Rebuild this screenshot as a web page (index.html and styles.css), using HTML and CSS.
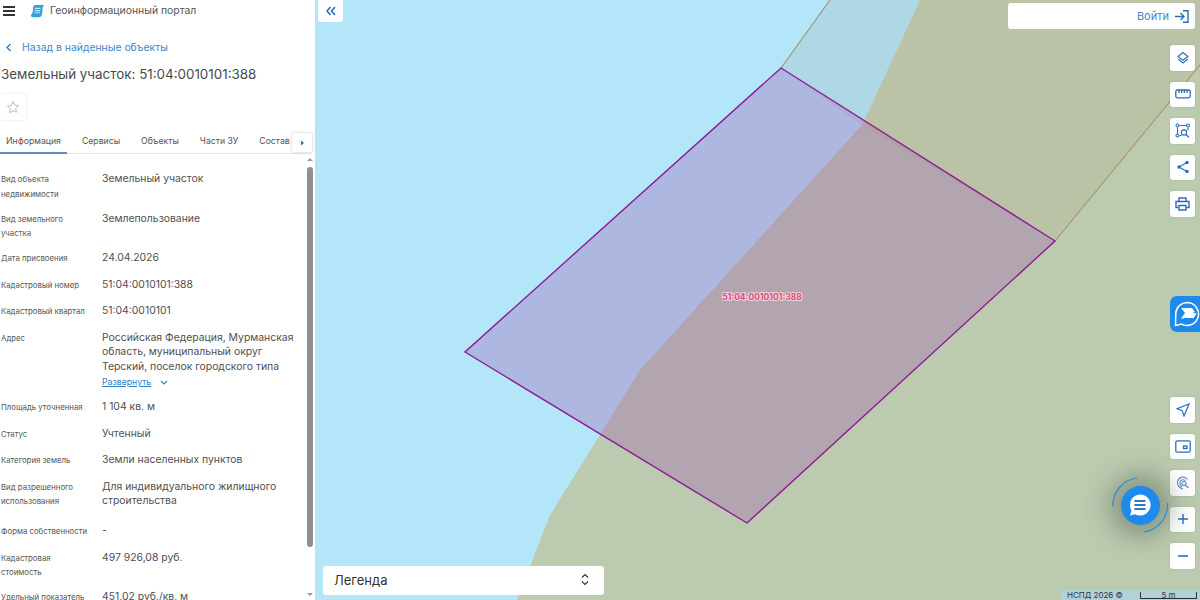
FILE: index.html
```html
<!DOCTYPE html>
<html lang="ru">
<head>
    <meta charset="UTF-8">
    <title>Геоинформационный портал</title>
    <link rel="stylesheet" href="styles.css">
</head>
<body>
<div class="page">
    <aside class="sidebar">
        <header class="topbar">
            <div class="burger"><span></span><span></span><span></span></div>
            <svg class="logo" width="15" height="14" viewBox="0 0 16 16" preserveAspectRatio="none">
                <path d="M6 1h9c-.8 1-1.300 2-1.500 3.500L13 11c-.2 2.500-1.500 4-4 4H3C1 15 .5 13 1.500 12 2.300 11 2.800 10 3 8.500L3.300 4C3.500 2 4.500 1 6 1z" fill="#2f9fe6"/>
                <path d="M5.300 5h6M5 7.500h6M4.800 10h6" stroke="#bdeef5" stroke-width="1.300"/>
            </svg>
            <span class="portal-name">Геоинформационный портал</span>
        </header>

        <a class="back-link">
            <svg width="7" height="9" viewBox="0 0 7 9"><path d="M5.500 1 2 4.500 5.500 8" fill="none" stroke="#2b7fc9" stroke-width="1.400"/></svg>
            <span>Назад в найденные объекты</span>
        </a>

        <h1 class="title">Земельный участок: 51:04:0010101:388</h1>

        <div class="star-btn">
            <svg width="14" height="14" viewBox="0 0 14 14"><path d="m7 1.500 1.700 3.600 3.900.5-2.900 2.700.8 3.900L7 10.800l-3.500 1.900.8-3.900-2.900-2.700 3.900-.5z" fill="none" stroke="#b4b4b4" stroke-width=".9"/></svg>
        </div>

        <nav class="tabs">
            <a class="tab active">Информация</a>
            <a class="tab">Сервисы</a>
            <a class="tab">Объекты</a>
            <a class="tab">Части ЗУ</a>
            <a class="tab">Состав</a>
            <div class="tab-next"><svg width="5" height="6" viewBox="0 0 5 6"><path d="M1 0.500 4 3 1 5.500z" fill="#2b6cb8"/></svg></div>
        </nav>

        <div class="info">
            <div class="row"><div class="label">Вид объекта недвижимости</div><div class="value">Земельный участок</div></div>
            <div class="row"><div class="label">Вид земельного участка</div><div class="value">Землепользование</div></div>
            <div class="row"><div class="label">Дата присвоения</div><div class="value">24.04.2026</div></div>
            <div class="row"><div class="label">Кадастровый номер</div><div class="value">51:04:0010101:388</div></div>
            <div class="row"><div class="label">Кадастровый квартал</div><div class="value">51:04:0010101</div></div>
            <div class="row">
                <div class="label">Адрес</div>
                <div class="value">
                    Российская Федерация, Мурманская область, муниципальный округ Терский, поселок городского типа
                    <div class="expand">
                        <a>Развернуть</a>
                        <svg width="8" height="5" viewBox="0 0 8 5"><path d="M1 1 4 4 7 1" fill="none" stroke="#2b7fc9" stroke-width="1.100"/></svg>
                    </div>
                </div>
            </div>
            <div class="row"><div class="label">Площадь уточненная</div><div class="value">1 104 кв. м</div></div>
            <div class="row"><div class="label">Статус</div><div class="value">Учтенный</div></div>
            <div class="row"><div class="label">Категория земель</div><div class="value">Земли населенных пунктов</div></div>
            <div class="row row-spaced"><div class="label">Вид разрешенного использования</div><div class="value">Для индивидуального жилищного строительства</div></div>
            <div class="row"><div class="label">Форма собственности</div><div class="value">-</div></div>
            <div class="row"><div class="label">Кадастровая стоимость</div><div class="value">497 926,08 руб.</div></div>
            <div class="row"><div class="label">Удельный показатель</div><div class="value">451,02 руб./кв. м</div></div>
        </div>

        <div class="scroll-up"></div>
        <div class="scroll-thumb"></div>
        <div class="scroll-down"></div>
    </aside>

    <main class="map">
        <svg class="map-canvas" viewBox="315 0 885 600" width="885" height="600">
            <rect x="315" y="0" width="885" height="600" fill="#b3e6f9"/>
            <path d="M920 0 862 125 640 370 600 435 550 515 517 600H1200V0z" fill="#bccbb0"/>
            <path d="M920 0H1200V65L1055 241 862 125z" fill="#bac3a5"/>
            <path d="M830 0H920L862 125 781 68z" fill="#aed8e6"/>
            <path d="M830 0 781 68M1200 65 1055 241" fill="none" stroke="#a8906a" stroke-width="1.100"/>
            <path d="M781 68 1055 241 747 523 465 352z" fill="#a057ac" fill-opacity=".33" stroke="#8f1a96" stroke-width="1.400"/>
            <text class="parcel-label" x="762" y="300" text-anchor="middle">51:04:0010101:388</text>
        </svg>

        <div class="collapse-btn">
            <svg width="12" height="12" viewBox="0 0 12 12"><path d="M5.500 2 2 6l3.500 4M10 2 6.500 6l3.500 4" fill="none" stroke="#2b6cb8" stroke-width="1.500"/></svg>
        </div>

        <div class="login">
            <span>Войти</span>
            <svg width="14" height="13" viewBox="0 0 14 13"><path d="M0 6.500h8.500M5.500 3l3.500 3.500L5.500 10M8 .7h5v11.600H8" fill="none" stroke="#2b6cb8" stroke-width="1.400"/></svg>
        </div>

        <div class="tools tools-top">
            <div class="tool">
                <svg width="14" height="14" viewBox="0 0 14 14" fill="none" stroke="#2b6cb8" stroke-width="1.100"><path d="M7 1.500 12 5.500 7 9.300 2 5.500z"/><path d="M2 8 7 12 12 8"/></svg>
            </div>
            <div class="tool">
                <svg width="16" height="10" viewBox="0 0 16 10" fill="none" stroke="#2b6cb8" stroke-width="1.300"><rect x=".8" y="1" width="14.400" height="7.800" rx="1.500"/><path d="M4 1v3M6.700 1v3M9.400 1v3M12.100 1v3"/></svg>
            </div>
            <div class="tool">
                <svg width="16" height="16" viewBox="0 0 16 16" fill="none" stroke="#2b6cb8" stroke-width="1.100"><circle cx="2.500" cy="2.500" r="1.500"/><circle cx="13" cy="2.500" r="1.500"/><circle cx="2.500" cy="12.500" r="1.500"/><circle cx="9" cy="9.500" r="2.600"/><path d="M4.500 2.500h6.500M2.500 4.500v6M13 4.500v3M4.500 12.500h2M11 11.500l3 3"/></svg>
            </div>
            <div class="tool">
                <svg width="14" height="14" viewBox="0 0 14 14"><path d="M11 2.500 3 7l8 4.500" fill="none" stroke="#2b6cb8" stroke-width="1.100"/><circle cx="11" cy="2.500" r="1.700" fill="#2b6cb8"/><circle cx="3" cy="7" r="1.700" fill="#2b6cb8"/><circle cx="11" cy="11.500" r="1.700" fill="#2b6cb8"/></svg>
            </div>
            <div class="tool">
                <svg width="15" height="14" viewBox="0 0 15 14" fill="none" stroke="#2b6cb8" stroke-width="1.400"><path d="M4 4V1h7v3M3.500 10.500H1V4.500h13v6h-2.500"/><path d="M4 8.500h7v4.500H4z"/></svg>
            </div>
        </div>

        <div class="assistant">
            <svg width="28" height="28" viewBox="0 0 28 28" fill="none" stroke="#fff" stroke-width="1.500"><path d="M14 2.500a11.500 11.500 0 1 1-5.500 21.600L2.500 25.500 2.800 13A11.500 11.500 0 0 1 14 2.500z"/><path d="M8 8h11l3 4-2.500 1 4 .5-3 5H8l4-5.500z" fill="#fff" stroke="none"/><path d="M11 18.500h10l2.500-4" stroke="#1e8aeb" stroke-width="1"/></svg>
        </div>

        <div class="tools tools-bottom">
            <div class="tool">
                <svg width="14" height="14" viewBox="0 0 14 14"><path d="M13 1 1 5.800l5.200 1.800L8 13z" fill="none" stroke="#2b6cb8" stroke-width="1.200"/></svg>
            </div>
            <div class="tool">
                <svg width="16" height="13" viewBox="0 0 16 13" fill="none" stroke="#2b6cb8" stroke-width="1.300"><rect x=".8" y=".8" width="14.400" height="11.400" rx="1.500"/><rect x="8.500" y="6" width="3.500" height="2.500"/></svg>
            </div>
            <div class="tool">
                <svg width="14" height="14" viewBox="0 0 14 14" fill="none" stroke="#5f8fc4" stroke-width="1.100"><path d="M7 13C3.500 12 1.500 9.500 1.500 6.500a5.500 5.500 0 0 1 10-3"/><path d="M6 11C4.500 10 3.800 8.500 3.800 7a3.200 3.200 0 0 1 5.500-2.200"/><circle cx="8" cy="7.500" r="2"/><path d="M9.500 9l3 3"/></svg>
            </div>
            <div class="tool">
                <svg width="12" height="12" viewBox="0 0 12 12"><path d="M6 1v10M1 6h10" stroke="#2b6cb8" stroke-width="1.400"/></svg>
            </div>
            <div class="tool">
                <svg width="12" height="12" viewBox="0 0 12 12"><path d="M1 6h10" stroke="#2b6cb8" stroke-width="1.600"/></svg>
            </div>
        </div>

        <div class="chat">
            <div class="chat-btn">
                <svg width="24" height="24" viewBox="0 0 24 24"><path d="M12 1.500a10.500 10.500 0 1 1-5 19.700L2 22.500l1.500-5A10.500 10.500 0 0 1 12 1.500z" fill="#fff"/><path d="M6.500 8h11M6.500 12h11M6.500 16h11" stroke="#2b78c4" stroke-width="1.800"/></svg>
            </div>
            <svg class="chat-arcs" width="66" height="66" viewBox="0 0 66 66" fill="none" stroke="#2f8bd0" stroke-width="1.200"><path d="M6 35A27.500 27.500 0 0 1 30 6"/><path d="M60.500 31A27.500 27.500 0 0 1 37 60"/></svg>
        </div>

        <div class="legend">
            <span>Легенда</span>
            <svg width="8" height="13" viewBox="0 0 8 13" fill="none" stroke="#333" stroke-width="1.200"><path d="M1 4.500 4 1.500 7 4.500M1 8.500 4 11.500 7 8.500"/></svg>
        </div>

        <div class="attribution">
            <span class="copyright">НСПД 2026 ©</span>
            <div class="scale">5 m</div>
        </div>
    </main>
</div>
</body>
</html>
```

FILE: styles.css
```css
* {
    box-sizing: border-box;
}

html, body {
    margin: 0;
    height: 100%;
    overflow: hidden;
}

body {
    font-family: "Inter", "Noto Sans", sans-serif;
    color: #444;
}

.page {
    display: flex;
    width: 1200px;
    height: 600px;
}

/* Left panel */
.sidebar {
    position: relative;
    width: 315px;
    height: 600px;
    flex-shrink: 0;
    background: #fff;
    overflow: hidden;
}

.topbar {
    display: flex;
    align-items: center;
    height: 21px;
    padding-left: 3px;
}

.burger {
    display: flex;
    flex-direction: column;
    gap: 2px;
    width: 12px;
    margin-right: 15px;
}

.burger span {
    display: block;
    height: 2px;
    background: #333;
}

.logo {
    margin-right: 5px;
}

.portal-name {
    font-size: 10.4px;
    color: #555;
}

.back-link {
    display: flex;
    align-items: center;
    gap: 10px;
    margin: 18px 0 0 5px;
    height: 16px;
    font-size: 10.4px;
    color: #3b87cf;
}

.title {
    margin: 9px 0 0 1px;
    height: 20px;
    font-size: 13.4px;
    line-height: 20px;
    font-weight: 400;
    color: #4a4a4a;
    white-space: nowrap;
}

.star-btn {
    display: flex;
    align-items: center;
    justify-content: center;
    width: 26px;
    height: 26px;
    margin-top: 10px;
    border-radius: 3px;
    box-shadow: 0 0 3px rgba(0, 0, 0, .12);
}

/* Tabs */
.tabs {
    position: relative;
    display: flex;
    height: 24px;
    margin-top: 10px;
    margin-right: 3px;
    border-bottom: 1px solid #e6e9ec;
    font-size: 8.7px;
    color: #555;
}

.tab {
    padding: 6px 6px 0;
    margin-right: 9px;
    white-space: nowrap;
}

.tab.active {
    border-bottom: 2px solid #5b8fc0;
    height: 24px;
    margin-bottom: -1px;
}

.tab-next {
    position: absolute;
    top: 3px;
    left: 292px;
    display: flex;
    align-items: center;
    justify-content: center;
    width: 20px;
    height: 19px;
    background: #fff;
    border-radius: 2px;
    box-shadow: 0 0 3px rgba(0, 0, 0, .25);
}

/* Attribute list */
.info {
    display: flex;
    flex-direction: column;
    gap: 10px;
    padding: 18px 20px 0 1px;
}

.row {
    display: grid;
    grid-template-columns: 101px 1fr;
    min-height: 16.5px;
}

.row-spaced {
    margin-bottom: 5px;
}

.label {
    font-size: 7.8px;
    line-height: 14.75px;
    color: #555;
    padding-right: 12px;
}

.value {
    font-size: 10.4px;
    line-height: 14.5px;
    color: #4f4f4f;
}

.expand {
    display: flex;
    align-items: center;
    gap: 9px;
    height: 16px;
    font-size: 8.7px;
    color: #2b7fc9;
}

.expand a {
    text-decoration: underline;
}

/* Scrollbar drawn over the panel */
.scroll-thumb {
    position: absolute;
    left: 307px;
    top: 167px;
    width: 6px;
    height: 380px;
    border-radius: 3px;
    background: #8f8f8f;
}

.scroll-up,
.scroll-down {
    position: absolute;
    left: 307px;
    width: 0;
    height: 0;
    border-left: 3px solid transparent;
    border-right: 3px solid transparent;
}

.scroll-up {
    top: 158px;
    border-bottom: 3px solid #999;
}

.scroll-down {
    top: 593px;
    border-top: 3px solid #999;
}

/* Map */
.map {
    position: relative;
    flex: 1;
    height: 600px;
    overflow: hidden;
}

.map-canvas {
    display: block;
}

.parcel-label {
    font-family: "Inter", sans-serif;
    font-size: 8.5px;
    font-weight: 700;
    fill: #d6507a;
    stroke: #f3d3dc;
    stroke-width: 2px;
    paint-order: stroke;
}

.collapse-btn {
    position: absolute;
    left: 3px;
    top: 0;
    display: flex;
    align-items: center;
    justify-content: center;
    width: 25px;
    height: 22px;
    background: #fff;
    border-radius: 0 0 3px 3px;
}

.login {
    position: absolute;
    left: 693px;
    top: 3px;
    display: flex;
    align-items: center;
    justify-content: flex-end;
    gap: 6px;
    width: 187px;
    height: 26px;
    padding-right: 6px;
    background: #fff;
    border-radius: 3px;
    font-size: 11px;
    color: #4a86c5;
}

.tools {
    position: absolute;
    left: 855px;
    display: flex;
    flex-direction: column;
    gap: 11px;
}

.tools-top {
    top: 45px;
}

.tools-bottom {
    top: 397px;
}

.tool {
    display: flex;
    align-items: center;
    justify-content: center;
    width: 25px;
    height: 25.5px;
    background: #fff;
    border-radius: 3px;
    box-shadow: 0 0 2px rgba(0, 0, 0, .15);
}

.assistant {
    position: absolute;
    left: 855px;
    top: 296px;
    display: flex;
    align-items: center;
    padding-left: 3px;
    width: 30px;
    height: 36px;
    background: #1e8aeb;
    border-radius: 7px 0 0 7px;
    overflow: hidden;
}

.assistant svg {
    flex-shrink: 0;
}

.chat {
    position: absolute;
    left: 792px;
    top: 472px;
    width: 66px;
    height: 66px;
    display: flex;
    align-items: center;
    justify-content: center;
}

.chat-arcs {
    position: absolute;
    left: 0;
    top: 0;
}

.chat-btn {
    display: flex;
    align-items: center;
    justify-content: center;
    width: 39px;
    height: 39px;
    border-radius: 50%;
    background: #1e8aeb;
    box-shadow: 0 0 26px 12px rgba(60, 75, 60, .42);
}

.legend {
    position: absolute;
    left: 8px;
    top: 566px;
    display: flex;
    align-items: center;
    justify-content: space-between;
    width: 281px;
    height: 29px;
    padding: 0 15px 2px 11px;
    background: #fff;
    border-radius: 3px;
    font-size: 13px;
    color: #333;
}

.attribution {
    position: absolute;
    left: 746px;
    top: 590px;
    display: flex;
    align-items: center;
    width: 139px;
    height: 10px;
    padding-left: 6px;
    background: #b2d2d8;
    font-size: 8px;
    color: #334;
}

.copyright {
    width: 73px;
    white-space: nowrap;
}

.scale {
    width: 57px;
    height: 7px;
    margin-top: 1px;
    line-height: 6px;
    text-align: center;
    border: 1px solid #333;
    border-top: 0;
}
```
